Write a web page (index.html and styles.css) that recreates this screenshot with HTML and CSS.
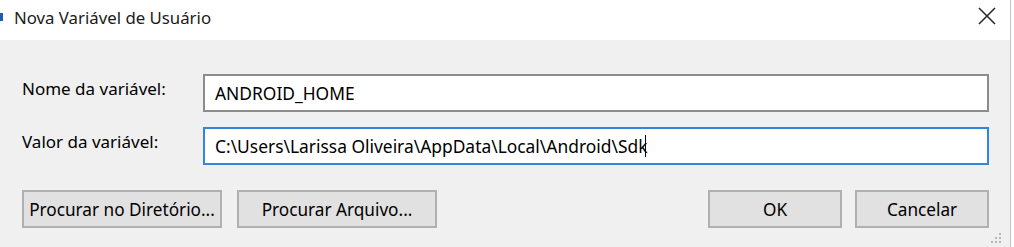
FILE: index.html
```html
<!DOCTYPE html>
<html lang="pt-BR">
<head>
    <meta charset="UTF-8">
    <meta name="viewport" content="width=device-width, initial-scale=1.0">
    <title>Nova Variável de Usuário</title>
    <link rel="stylesheet" href="styles.css">
</head>
<body>
    <div class="window">
        <div class="titlebar">
            <span class="app-icon"></span>
            <span class="title">Nova Variável de Usuário</span>
            <span class="close">
                <svg width="18" height="18" viewBox="0 0 18 18">
                    <path d="M1 1 L17 17 M17 1 L1 17" stroke="#2b2b2b" stroke-width="1.6" fill="none"/>
                </svg>
            </span>
        </div>
        <div class="content">
            <div class="fields">
                <label class="label">Nome da variável:</label>
                <div class="field">ANDROID_HOME</div>
                <label class="label">Valor da variável:</label>
                <div class="field focused">C:\Users\Larissa Oliveira\AppData\Local\Android\Sdk<span class="caret"></span></div>
            </div>
            <div class="buttons">
                <button class="btn wide">Procurar no Diretório...</button>
                <button class="btn wide">Procurar Arquivo...</button>
                <div class="spacer"></div>
                <button class="btn">OK</button>
                <button class="btn">Cancelar</button>
            </div>
            <div class="grip">
                <svg width="12" height="12" viewBox="0 0 12 12" fill="#b8b8b8">
                    <rect x="9" y="0" width="2" height="2"/>
                    <rect x="5" y="4" width="2" height="2"/>
                    <rect x="9" y="4" width="2" height="2"/>
                    <rect x="1" y="8" width="2" height="2"/>
                    <rect x="5" y="8" width="2" height="2"/>
                    <rect x="9" y="8" width="2" height="2"/>
                </svg>
            </div>
        </div>
    </div>
</body>
</html>
```

FILE: styles.css
```css
body {
    margin: 0;
    background: #ffffff;
    font-family: "Noto Sans", "Open Sans", sans-serif;
    color: #000;
}
.window {
    width: 1010px;
    height: 247px;
    border-right: 1px solid #c4c4c4;
    background: #f0f0f0;
    display: flex;
    flex-direction: column;
    overflow: hidden;
}
.titlebar {
    height: 40px;
    background: #ffffff;
    display: flex;
    align-items: center;
}
.app-icon {
    width: 3px;
    height: 8px;
    background: #1c5fb0;
    margin-top: -6px;
}
.title {
    margin-left: 11px;
    font-size: 16.8px;
    margin-top: -6px;
    color: #1a1a1a;
}
.close {
    margin-left: auto;
    margin-right: 14px;
    margin-top: -8px;
    display: flex;
}
.content {
    flex: 1;
    padding: 34px 21px 0 22px;
    position: relative;
}
.fields {
    display: grid;
    grid-template-columns: 181px 1fr;
    row-gap: 15px;
    align-items: start;
}
.label {
    font-size: 17px;
    padding-top: 3px;
}
.field {
    height: 34px;
    border: 2px solid #8c8c8c;
    background: #ffffff;
    padding-left: 10px;
    font-size: 17.4px;
    display: flex;
    align-items: center;
}
.field.focused {
    border-color: #2f86dc;
}
.caret {
    display: inline-block;
    width: 1px;
    height: 22px;
    background: #000;
    margin-left: -2px;
}
.buttons {
    display: flex;
    gap: 15px;
    margin-top: 25px;
}
.spacer {
    flex: 1;
}
.btn {
    width: 134px;
    height: 38px;
    border: 2px solid #b0b0b0;
    background: #e1e1e1;
    font-family: inherit;
    font-size: 17.2px;
    color: #000;
    padding: 0;
}
.btn.wide {
    width: 200px;
}
.buttons .btn:last-child {
    margin-left: -2px;
}
.grip {
    position: absolute;
    right: 8px;
    bottom: 2px;
    display: flex;
}
```
